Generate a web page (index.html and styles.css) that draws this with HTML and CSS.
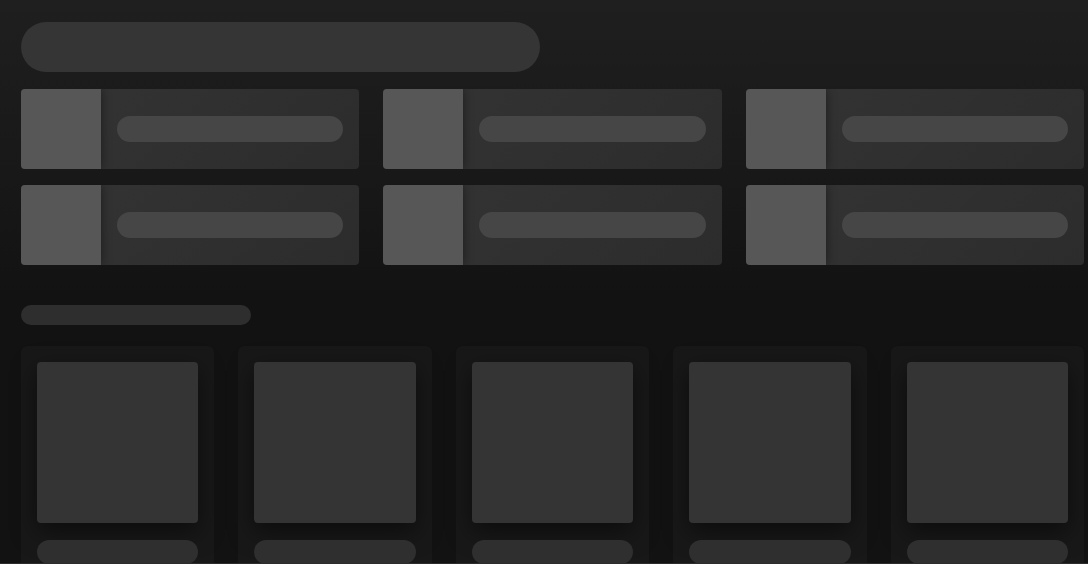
FILE: index.html
```html
<!DOCTYPE html>
<html lang="en">
<head>
<meta charset="utf-8">
<title>Home</title>
<link rel="stylesheet" href="styles.css">
</head>
<body>
<main class="view">
  <div class="greeting"></div>
  <section class="shortcuts">
    <div class="shortcut"><div class="sc-art"></div><div class="sc-body"><div class="sc-line"></div></div></div>
    <div class="shortcut"><div class="sc-art"></div><div class="sc-body"><div class="sc-line"></div></div></div>
    <div class="shortcut"><div class="sc-art"></div><div class="sc-body"><div class="sc-line"></div></div></div>
    <div class="shortcut"><div class="sc-art"></div><div class="sc-body"><div class="sc-line"></div></div></div>
    <div class="shortcut"><div class="sc-art"></div><div class="sc-body"><div class="sc-line"></div></div></div>
    <div class="shortcut"><div class="sc-art"></div><div class="sc-body"><div class="sc-line"></div></div></div>
  </section>
  <div class="section-title"></div>
  <section class="cards">
    <div class="card"><div class="card-art"></div><div class="card-line"></div></div>
    <div class="card"><div class="card-art"></div><div class="card-line"></div></div>
    <div class="card"><div class="card-art"></div><div class="card-line"></div></div>
    <div class="card"><div class="card-art"></div><div class="card-line"></div></div>
    <div class="card"><div class="card-art"></div><div class="card-line"></div></div>
  </section>
</main>
</body>
</html>
```
FILE: styles.css
```css
* { box-sizing: border-box; }
html, body {
  margin: 0;
  padding: 0;
  background: #121212;
  font-family: "Liberation Sans", Arial, sans-serif;
}
.view {
  height: 564px;
  overflow: hidden;
  padding: 22px 4px 0 21px;
  background: linear-gradient(180deg, #1f1f1f 0px, #171717 200px, #121212 300px, #121212 100%);
  border-bottom: 1px solid #2c2c2c;
}
.greeting {
  width: 519px;
  height: 50px;
  border-radius: 25px;
  background: #353535;
}
.shortcuts {
  margin-top: 17px;
  display: grid;
  grid-template-columns: repeat(3, 1fr);
  column-gap: 24px;
  row-gap: 16px;
}
.shortcut {
  height: 80px;
  display: flex;
  border-radius: 4px;
  overflow: hidden;
  background: linear-gradient(135deg, #343434 0%, #2c2c2c 100%);
}
.sc-art {
  width: 80px;
  flex: none;
  background: #575757;
  box-shadow: 0 0 10px rgba(0, 0, 0, 0.45);
  position: relative;
  z-index: 1;
}
.sc-body {
  flex: 1;
  display: flex;
  align-items: center;
  padding: 0 16px;
}
.sc-line {
  flex: 1;
  height: 26px;
  border-radius: 13px;
  background: #464646;
}
.section-title {
  margin-top: 40px;
  width: 230px;
  height: 20px;
  border-radius: 10px;
  background: #2e2e2e;
}
.cards {
  margin-top: 21px;
  display: grid;
  grid-template-columns: repeat(5, 1fr);
  column-gap: 24px;
}
.card {
  background: #181818;
  border-radius: 6px;
  padding: 16px 16px 16px;
  height: 260px;
}
.card-art {
  aspect-ratio: 1 / 1;
  border-radius: 4px;
  background: #343434;
  box-shadow: 0 8px 24px rgba(0, 0, 0, 0.5);
}
.card-line {
  margin-top: 17px;
  height: 24px;
  border-radius: 12px;
  background: #2f2f2f;
}
```
